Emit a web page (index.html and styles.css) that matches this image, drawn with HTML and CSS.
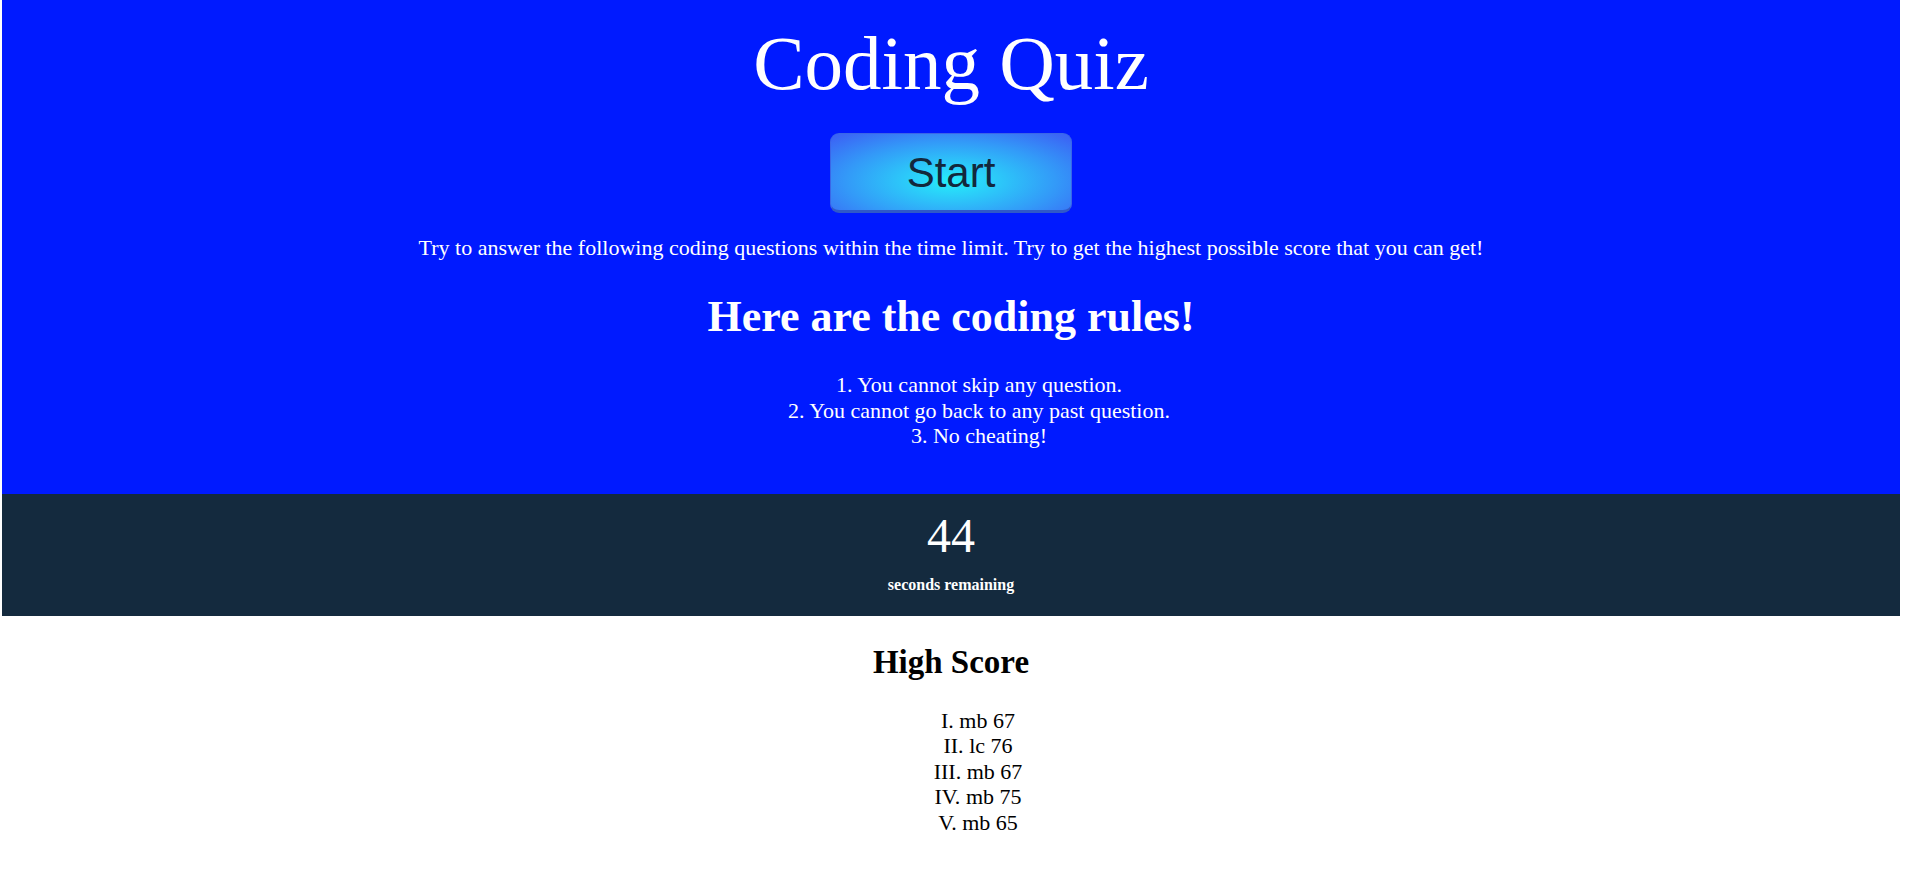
FILE: index.html
```html
<!DOCTYPE html>
<html lang="en">
<head>
<meta charset="utf-8">
<title>Coding Quiz</title>
<link rel="stylesheet" href="styles.css">
</head>
<body>
  <header class="hero">
    <h1 class="title">Coding Quiz</h1>
    <button class="start-btn" type="button">Start</button>
    <p class="intro">Try to answer the following coding questions within the time limit. Try to get the highest possible score that you can get!</p>
    <h2 class="rules-title">Here are the coding rules!</h2>
    <div class="rules">
      <div>1. You cannot skip any question.</div>
      <div>2. You cannot go back to any past question.</div>
      <div>3. No cheating!</div>
    </div>
  </header>
  <section class="timer">
    <div class="timer-count">44</div>
    <div class="timer-label">seconds remaining</div>
  </section>
  <section class="scores">
    <h1 class="scores-title">High Score</h1>
    <ol class="score-list">
      <li>mb 67</li>
      <li>lc 76</li>
      <li>mb 67</li>
      <li>mb 75</li>
      <li>mb 65</li>
    </ol>
  </section>
</body>
</html>
```

FILE: styles.css
```css
html, body {
  margin: 0;
  padding: 0;
  background: #ffffff;
}

body {
  font-family: "Liberation Serif", "Times New Roman", serif;
  color: #000;
}

.hero {
  margin: 0 11px 0 2px;
  background: #001aff;
  color: #ffffff;
  display: flex;
  flex-direction: column;
  align-items: center;
  text-align: center;
  padding: 17px 0 45px;
}

.title {
  font-size: 77px;
  font-weight: normal;
  margin: 0;
  line-height: 92px;
}

.start-btn {
  margin-top: 24px;
  width: 242px;
  height: 80px;
  box-sizing: border-box;
  border: 1px solid #3a66e8;
  border-bottom: 3px solid #3059c8;
  border-radius: 9px;
  background: radial-gradient(ellipse 80% 95% at 50% 62%, #25eefa 0%, #2cc8f9 25%, #3399f8 55%, #3b66f5 85%, #3d5cf4 100%);
  color: #13283c;
  font-family: "Liberation Sans", Arial, sans-serif;
  font-size: 42px;
  padding: 2px 0 0;
}

.intro {
  font-size: 22px;
  margin: 22px 0 0;
  line-height: 25px;
}

.rules-title {
  font-size: 44px;
  font-weight: bold;
  margin: 31px 0 0;
  line-height: 52px;
}

.rules {
  margin-top: 29px;
  padding-left: 56px;
  font-size: 22px;
  line-height: 25.5px;
}

.timer {
  margin: 0 11px 0 2px;
  background: #142a3e;
  color: #ffffff;
  display: flex;
  flex-direction: column;
  align-items: center;
  padding: 14px 0 22px;
}

.timer-count {
  font-size: 48px;
  line-height: 55px;
}

.timer-label {
  margin-top: 13px;
  font-size: 16px;
  font-weight: bold;
  line-height: 18px;
}

.scores {
  margin: 0 11px 0 2px;
  display: flex;
  flex-direction: column;
  align-items: center;
  padding-top: 28px;
}

.scores-title {
  font-size: 33px;
  margin: 0;
  line-height: 37px;
}

.score-list {
  list-style: upper-roman inside;
  margin: 27px 0 0;
  padding: 0 0 0 54px;
  text-align: center;
  font-size: 22px;
  line-height: 25.5px;
}
```
